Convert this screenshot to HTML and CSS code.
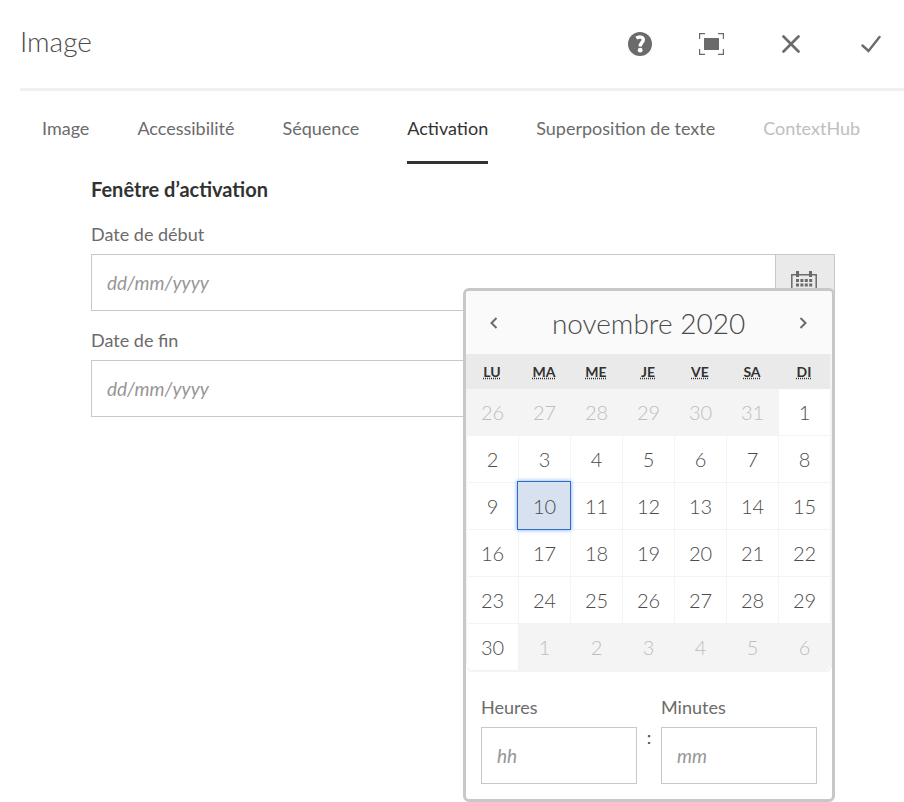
FILE: index.html
```html
<!DOCTYPE html>
<html lang="fr">
<head>
<meta charset="utf-8">
<meta name="viewport" content="width=device-width, initial-scale=1">
<title>Image</title>
<link rel="stylesheet" href="styles.css">
</head>
<body>
<header class="header">
  <h1 class="title">Image</h1>
  <div class="actions">
    <button class="action action-small" type="button" aria-label="Aide">
      <svg width="24" height="24" viewBox="0 0 24 24"><circle cx="12" cy="12" r="12" fill="currentColor"/><path d="M8.300 6.200C11 4.300 15.300 4.600 15.300 7.800c0 2.700-3.100 2.900-3.100 6.600" fill="none" stroke="#fff" stroke-width="3.400"/><circle cx="12.200" cy="18.200" r="2.400" fill="#fff"/></svg>
    </button>
    <button class="action" type="button" aria-label="Plein écran">
      <svg width="25" height="22" viewBox="0 0 25 22"><rect x="5" y="5" width="15" height="12" fill="currentColor"/><path d="M.6 6V.6H6M19 .6h5.400V6M24.400 16v5.400H19M6 21.400H.6V16" fill="none" stroke="currentColor" stroke-width="1.200"/></svg>
    </button>
    <button class="action" type="button" aria-label="Annuler">
      <svg width="18" height="18" viewBox="0 0 18 18"><path d="M1.500 1.500l15 15M16.500 1.500l-15 15" fill="none" stroke="currentColor" stroke-width="2.600" stroke-linecap="round"/></svg>
    </button>
    <button class="action" type="button" aria-label="Terminer">
      <svg width="20" height="18" viewBox="0 0 20 18"><path d="M1.500 10.500l6 5.500L18.500 2" fill="none" stroke="currentColor" stroke-width="2.400" stroke-linecap="round"/></svg>
    </button>
  </div>
</header>
<nav class="tabs">
  <a class="tab" href="#image">Image</a>
  <a class="tab" href="#accessibilite">Accessibilité</a>
  <a class="tab" href="#sequence">Séquence</a>
  <a class="tab tab-selected" href="#activation" aria-current="page">Activation</a>
  <a class="tab" href="#superposition">Superposition de texte</a>
  <a class="tab tab-disabled" href="#contexthub" aria-disabled="true">ContextHub</a>
</nav>
<main class="panel">
  <h2 class="section-title">Fenêtre d’activation</h2>
  <div class="field">
    <label class="label" for="start">Date de début</label>
    <div class="picker">
      <input class="input" id="start" type="text" placeholder="dd/mm/yyyy">
      <button class="picker-button" type="button" aria-label="Calendrier">
        <svg width="26" height="24" viewBox="0 0 26 24"><path d="M.8 3.800h24.400v19.400H.8z" fill="none" stroke="currentColor" stroke-width="1.500"/><path d="M6.500 0v6M19.500 0v6" stroke="currentColor" stroke-width="3"/><path d="M5 9.500h17M5 14h17M5 18.500h17" stroke="currentColor" stroke-width="3" stroke-dasharray="3 1.400"/></svg>
      </button>
      <div class="popover">
        <div class="month">
          <button class="month-button" type="button" aria-label="Mois précédent"><svg width="8" height="12" viewBox="0 0 8 12"><path d="M6.500 1L1.500 6l5 5" fill="none" stroke="currentColor" stroke-width="2"/></svg></button>
          <h2 class="month-title">novembre 2020</h2>
          <button class="month-button" type="button" aria-label="Mois suivant"><svg width="8" height="12" viewBox="0 0 8 12"><path d="M1.500 1l5 5-5 5" fill="none" stroke="currentColor" stroke-width="2"/></svg></button>
        </div>
        <table class="calendar">
          <thead>
            <tr><th><abbr title="lundi">LU</abbr></th><th><abbr title="mardi">MA</abbr></th><th><abbr title="mercredi">ME</abbr></th><th><abbr title="jeudi">JE</abbr></th><th><abbr title="vendredi">VE</abbr></th><th><abbr title="samedi">SA</abbr></th><th><abbr title="dimanche">DI</abbr></th></tr>
          </thead>
          <tbody>
            <tr><td class="outside">26</td><td class="outside">27</td><td class="outside">28</td><td class="outside">29</td><td class="outside">30</td><td class="outside">31</td><td>1</td></tr>
            <tr><td>2</td><td>3</td><td>4</td><td>5</td><td>6</td><td>7</td><td>8</td></tr>
            <tr><td>9</td><td class="today">10</td><td>11</td><td>12</td><td>13</td><td>14</td><td>15</td></tr>
            <tr><td>16</td><td>17</td><td>18</td><td>19</td><td>20</td><td>21</td><td>22</td></tr>
            <tr><td>23</td><td>24</td><td>25</td><td>26</td><td>27</td><td>28</td><td>29</td></tr>
            <tr><td>30</td><td class="outside">1</td><td class="outside">2</td><td class="outside">3</td><td class="outside">4</td><td class="outside">5</td><td class="outside">6</td></tr>
          </tbody>
        </table>
        <div class="time">
          <div class="time-field">
            <label class="label" for="hours">Heures</label>
            <input class="input" id="hours" type="text" placeholder="hh">
          </div>
          <span class="colon">:</span>
          <div class="time-field">
            <label class="label" for="minutes">Minutes</label>
            <input class="input" id="minutes" type="text" placeholder="mm">
          </div>
        </div>
      </div>
    </div>
  </div>
  <div class="field">
    <label class="label" for="end">Date de fin</label>
    <div class="picker">
      <input class="input" id="end" type="text" placeholder="dd/mm/yyyy">
      <button class="picker-button" type="button" aria-label="Calendrier">
        <svg width="26" height="24" viewBox="0 0 26 24"><path d="M.8 3.800h24.400v19.400H.8z" fill="none" stroke="currentColor" stroke-width="1.500"/><path d="M6.500 0v6M19.500 0v6" stroke="currentColor" stroke-width="3"/><path d="M5 9.500h17M5 14h17M5 18.500h17" stroke="currentColor" stroke-width="3" stroke-dasharray="3 1.400"/></svg>
      </button>
    </div>
  </div>
</main>
</body>
</html>
```
FILE: styles.css
```css
* { box-sizing: border-box; }

body {
  min-height: 100vh;
  margin: 0;
  background: #fff;
  color: #6b6b6b;
  font-family: Lato, "Open Sans", sans-serif;
  font-size: 18px;
  line-height: 24px;
}

button {
  padding: 0;
  border: 0;
  background: none;
  color: #6b6b6b;
}

svg { display: block; }

.header {
  display: flex;
  justify-content: space-between;
  height: 91px;
  margin-left: 20px;
  border-bottom: 3px solid #f0f0f0;
}

.title {
  margin: 21px 0 0;
  color: #4b4b4b;
  font-size: 28px;
  line-height: 40px;
  font-weight: 300;
}

.actions {
  display: flex;
  align-items: center;
  height: 88px;
  gap: 30px;
  margin-right: 8px;
}

.action {
  display: flex;
  align-items: center;
  justify-content: center;
  width: 50px;
  height: 50px;
}

.action-small { width: 32px; }

.tabs {
  display: flex;
  gap: 48px;
  padding-left: 42px;
  white-space: nowrap;
}

.tab {
  height: 73px;
  padding-top: 25px;
  color: #6b6b6b;
  text-decoration: none;
}

.tab-selected {
  border-bottom: 3px solid #323232;
  color: #323232;
}

.tab-disabled { color: #bebebe; }

.panel {
  max-width: 1000px;
  padding: 13px 69px 0 91px;
}

.section-title {
  margin: 0 0 21px;
  color: #323232;
  font-size: 20px;
  line-height: 24px;
  font-weight: 700;
}

.field { margin-bottom: 17px; }

.label {
  display: block;
  margin-bottom: 8px;
}

.picker {
  position: relative;
  display: flex;
}

.input {
  width: 100%;
  min-width: 0;
  height: 57px;
  padding: 0 15px;
  border: 1px solid #c8c8c8;
  background: #fff;
  color: #4b4b4b;
  font: inherit;
  font-size: 19px;
}

.input::placeholder {
  color: #969696;
  font-style: italic;
  opacity: 1;
}

.picker-button {
  display: flex;
  flex: none;
  align-items: center;
  justify-content: center;
  width: 60px;
  margin-left: -1px;
  padding-right: 2px;
  border: 1px solid #c8c8c8;
  background: #eaeaea;
}

.popover {
  position: absolute;
  z-index: 1;
  top: 34px;
  right: 0;
  width: 372px;
  border: 3px solid #c8c8c8;
  border-radius: 6px;
  background: #fff;
}

.month {
  display: flex;
  align-items: center;
  justify-content: space-between;
  height: 63px;
  padding: 0 9px 0 8px;
  border-radius: 3px;
  background: #fafafa;
}

.month-title {
  margin: 0;
  color: #4b4b4b;
  font-size: 28px;
  line-height: 36px;
  font-weight: 300;
}

.month-button {
  display: flex;
  align-items: center;
  justify-content: center;
  width: 40px;
  height: 40px;
}

.calendar {
  width: 100%;
  border: solid #f4f4f4;
  border-width: 0 2px 2px 0;
  border-radius: 0 0 6px 6px;
  border-spacing: 0;
  table-layout: fixed;
  color: #4b4b4b;
  text-align: center;
}

.calendar th {
  height: 35px;
  padding: 0;
  background: #eaeaea;
  color: #323232;
  font-size: 14px;
  line-height: 16px;
  font-weight: 700;
}

.calendar td {
  height: 47px;
  padding: 0;
  border-top: 1px solid #f4f4f4;
  border-left: 1px solid #f4f4f4;
  font-size: 20px;
  line-height: 24px;
  font-weight: 300;
}

.calendar tbody tr:first-child td {
  height: 46px;
  border-top: 0;
}

.calendar .outside {
  background: #f4f4f4;
  color: #bebebe;
}

.calendar .today {
  position: relative;
  border-color: #d8e1f0;
  background: #d8e1f0;
  box-shadow: 0 0 0 1px #326ec8, 0 0 4px 1px #6ea5f0;
}

.calendar tr:last-child td:first-child { border-bottom-left-radius: 6px; }
.calendar tr:last-child td:last-child { border-bottom-right-radius: 6px; }

.time {
  display: flex;
  padding: 23px 15px 15px;
}

.time-field { flex: 1; min-width: 0; }

.colon {
  width: 24px;
  padding-top: 30px;
  color: #4b4b4b;
  text-align: center;
}
```
